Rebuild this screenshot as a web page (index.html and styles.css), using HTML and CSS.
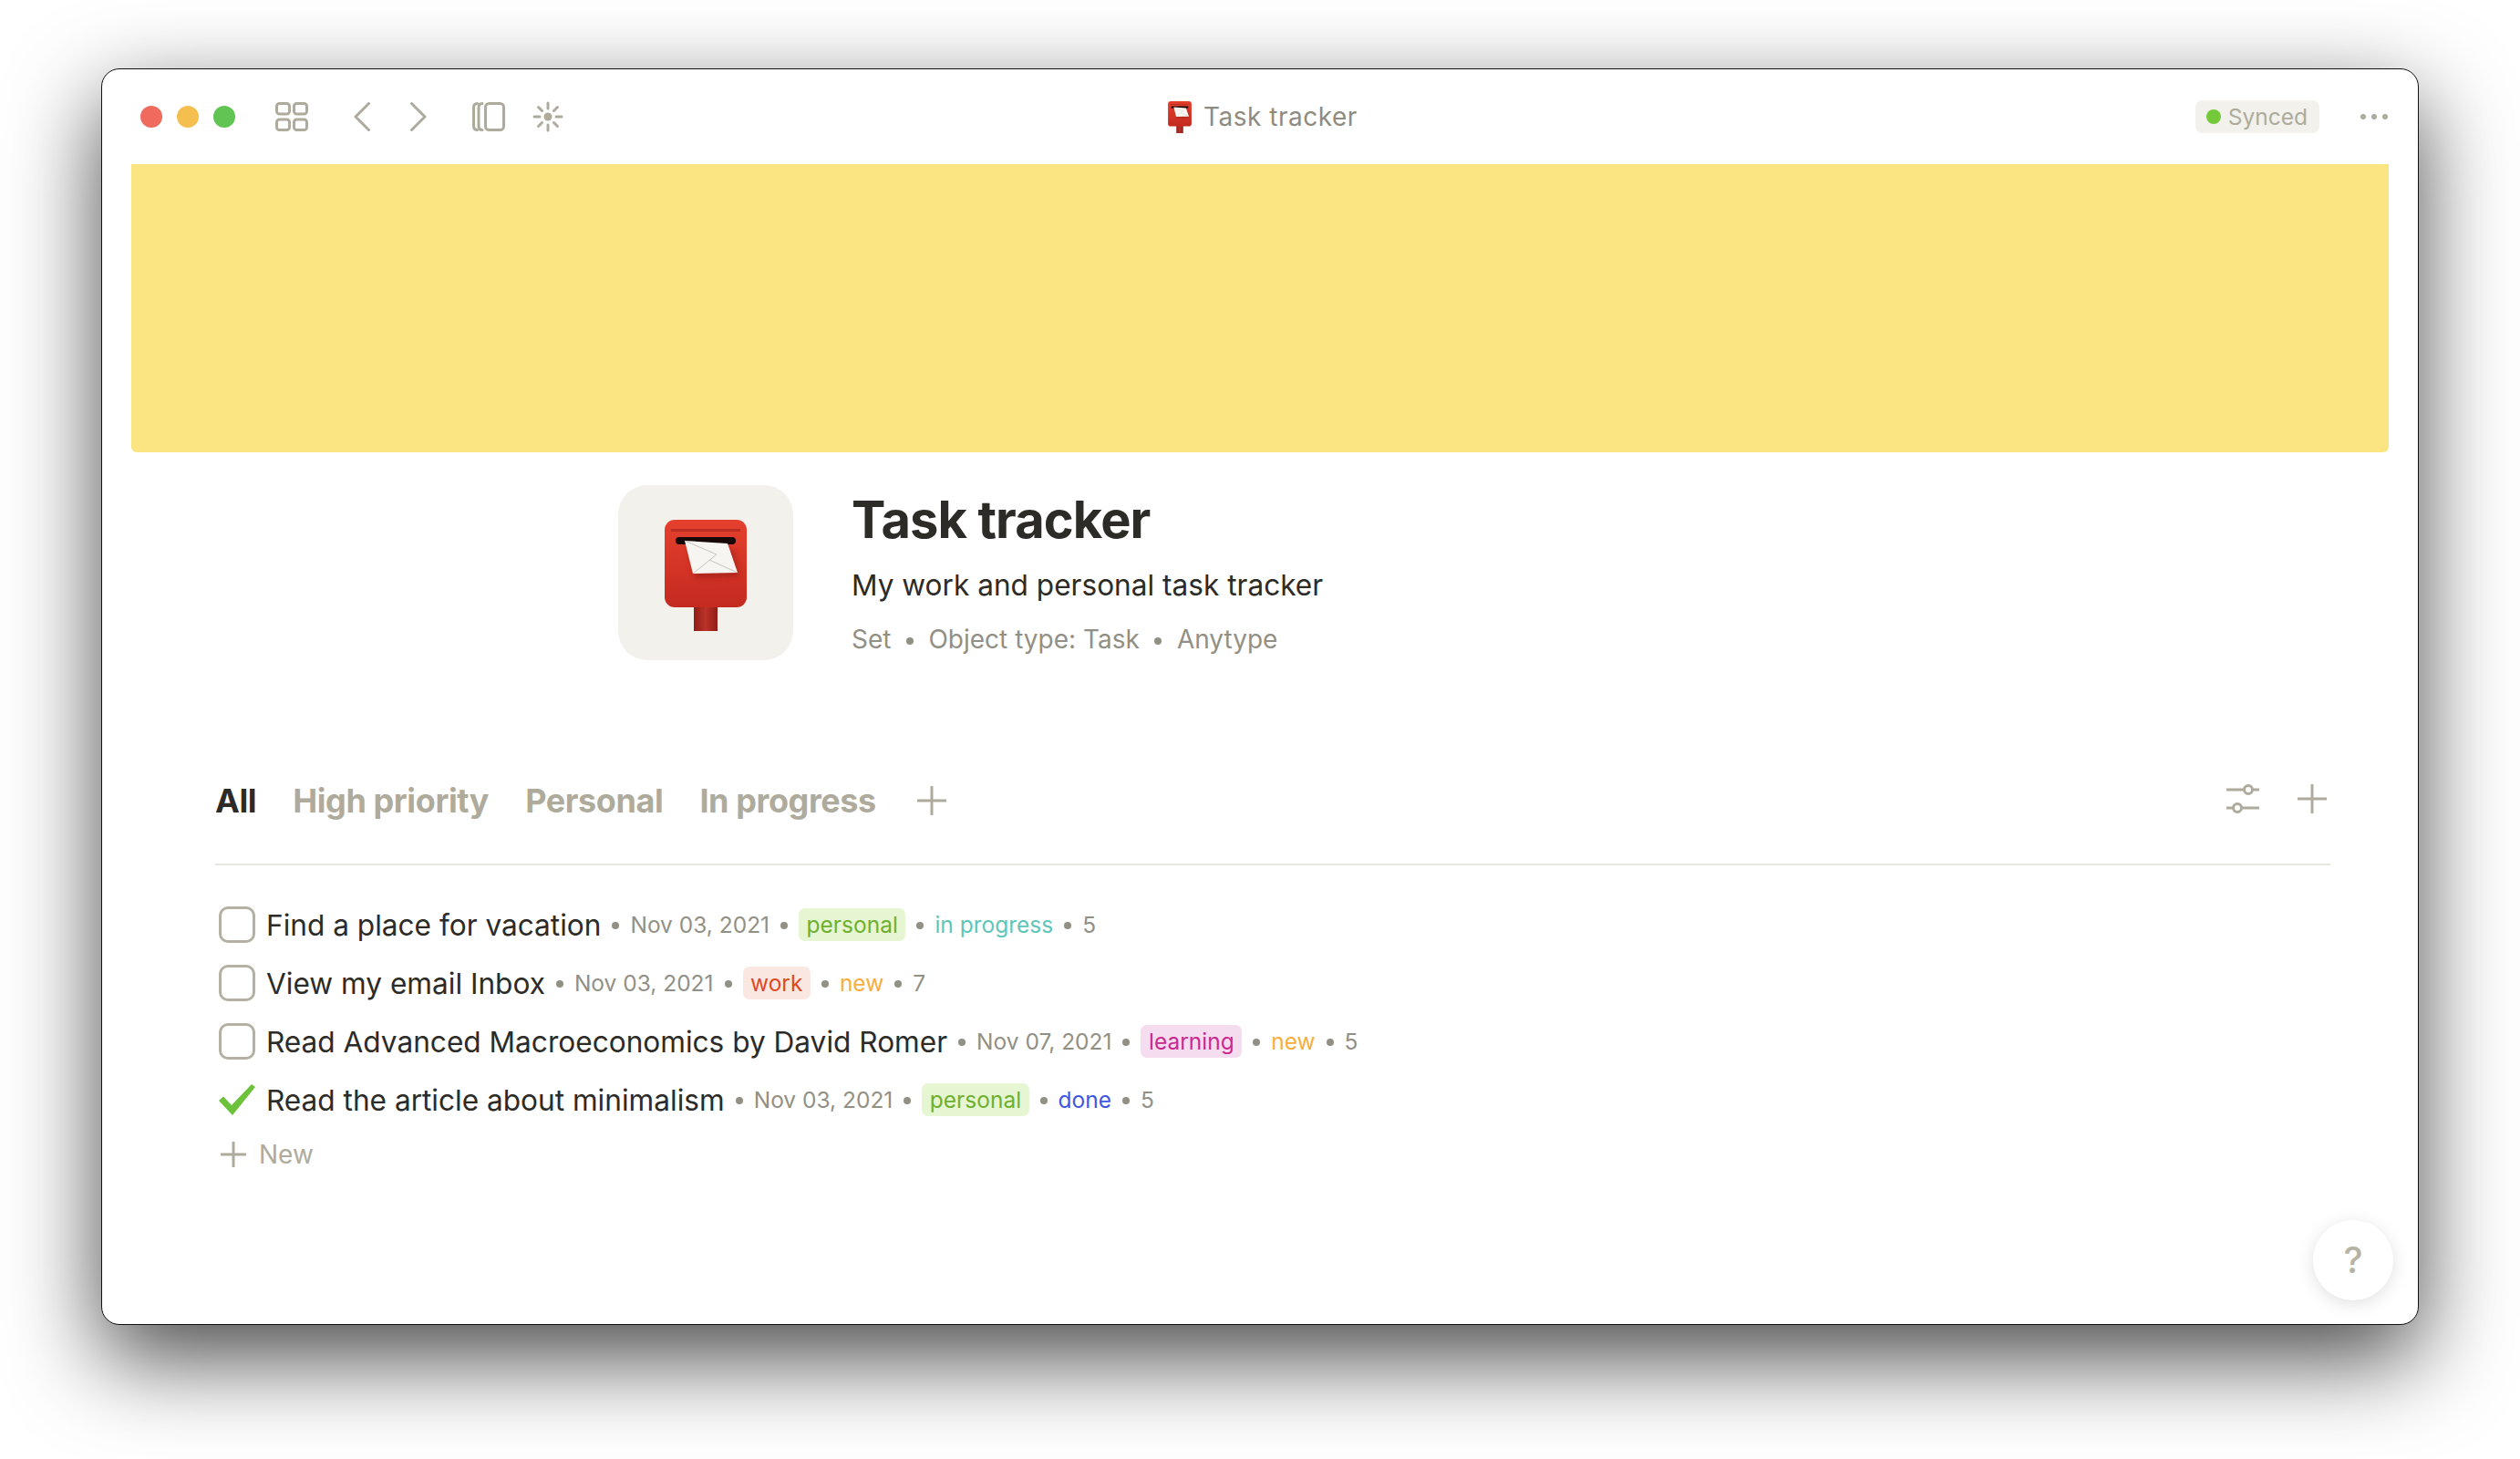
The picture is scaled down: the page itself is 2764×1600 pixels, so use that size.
FILE: index.html
```html
<!DOCTYPE html>
<html lang="en">
<head>
    <meta charset="UTF-8">
    <title>Task tracker</title>
    <link rel="stylesheet" href="styles.css">
</head>
<body>
    <svg class="defs" width="0" height="0">
        <defs>
            <linearGradient id="boxRed" x1="0" y1="0" x2="0" y2="1">
                <stop offset="0" stop-color="#e5402e"/>
                <stop offset="1" stop-color="#c42a1f"/>
            </linearGradient>
            <linearGradient id="postRed" x1="0" y1="0" x2="1" y2="0">
                <stop offset="0" stop-color="#8f1d16"/>
                <stop offset="0.5" stop-color="#bb3229"/>
                <stop offset="1" stop-color="#8f1d16"/>
            </linearGradient>
            <filter id="soft" x="-30%" y="-30%" width="160%" height="160%">
                <feGaussianBlur stdDeviation="3"/>
            </filter>
            <symbol id="postbox" viewBox="0 0 90 122">
                <rect x="32" y="90" width="26" height="32" fill="url(#postRed)"/>
                <rect width="90" height="96" rx="11" fill="url(#boxRed)"/>
                <rect x="7" y="10" width="76" height="3" fill="#a9281d" opacity="0.7"/>
                <rect x="12" y="19" width="66" height="8" rx="4" fill="#170707"/>
                <polygon points="26,30 76,34 82,62 34,64" fill="#8d1a12" opacity="0.55" filter="url(#soft)"/>
                <polygon points="22,23 69,26 80,58 31,59" fill="#f7f5f1"/>
                <path d="M22 23 L57 38 L31 59 M80 58 L49 44" fill="none" stroke="#bdb8b0" stroke-width="0.8"/>
            </symbol>
        </defs>
    </svg>

    <div class="window">
        <div class="titlebar">
            <div class="bar-left">
                <div class="lights">
                    <span class="light red"></span>
                    <span class="light yellow"></span>
                    <span class="light green"></span>
                </div>
                <svg class="icon grid-icon" viewBox="0 0 36 32">
                    <rect x="1.5" y="1.5" width="14" height="11.5" rx="3"/>
                    <rect x="20.5" y="1.5" width="14" height="11.5" rx="3"/>
                    <rect x="1.5" y="19" width="14" height="11.5" rx="3"/>
                    <rect x="20.5" y="19" width="14" height="11.5" rx="3"/>
                </svg>
                <svg class="icon back-icon" viewBox="0 0 18 32"><path d="M16.5 1.5 L2 16 L16.5 30.5"/></svg>
                <svg class="icon forward-icon" viewBox="0 0 18 32"><path d="M1.5 1.5 L16 16 L1.5 30.5"/></svg>
                <svg class="icon side-icon" viewBox="0 0 36 32">
                    <rect x="14.5" y="1.5" width="20" height="29" rx="4"/>
                    <path d="M5.5 1.5 C2.5 1.5 1.5 3.5 1.5 6 V26 C1.5 28.5 2.5 30.5 5.5 30.5"/>
                    <path d="M11 1.5 C8 1.5 7 3.5 7 6 V26 C7 28.5 8 30.5 11 30.5"/>
                </svg>
                <svg class="icon spark-icon" viewBox="0 0 34 34">
                    <circle class="solid" cx="17" cy="17" r="4.5"/>
                    <path d="M17 2 V8 M17 26 V32 M2 17 H8 M26 17 H32 M6.5 6.5 L10.5 10.5 M23.5 23.5 L27.5 27.5 M27.5 6.5 L23.5 10.5 M10.5 23.5 L6.5 27.5"/>
                </svg>
            </div>
            <div class="bar-title">
                <svg class="postbox-small"><use href="#postbox"/></svg>
                <span>Task tracker</span>
            </div>
            <div class="bar-right">
                <div class="synced"><span class="synced-dot"></span>Synced</div>
                <div class="more"><span></span><span></span><span></span></div>
            </div>
        </div>

        <div class="cover"></div>

        <div class="head">
            <div class="head-icon">
                <svg class="postbox-big"><use href="#postbox"/></svg>
            </div>
            <div class="head-text">
                <h1>Task tracker</h1>
                <p class="desc">My work and personal task tracker</p>
                <div class="info">
                    <span>Set</span><i class="info-dot"></i><span>Object type: Task</span><i class="info-dot"></i><span>Anytype</span>
                </div>
            </div>
        </div>

        <div class="content">
            <div class="views">
                <div class="tabs">
                    <span class="tab active">All</span>
                    <span class="tab">High priority</span>
                    <span class="tab">Personal</span>
                    <span class="tab">In progress</span>
                    <svg class="icon tab-plus" viewBox="0 0 32 32"><path d="M16 1 V31 M1 16 H31"/></svg>
                </div>
                <div class="view-tools">
                    <svg class="icon sliders" viewBox="0 0 36 32">
                        <path d="M1 6 H35 M1 26 H35"/>
                        <circle class="knob" cx="24" cy="6" r="4.5"/>
                        <circle class="knob" cx="12" cy="26" r="4.5"/>
                    </svg>
                    <svg class="icon tool-plus" viewBox="0 0 32 32"><path d="M16 1 V31 M1 16 H31"/></svg>
                </div>
            </div>

            <div class="rows">
                <div class="row">
                    <span class="check"></span>
                    <span class="name">Find a place for vacation</span>
                    <i class="sep"></i><span class="date">Nov 03, 2021</span>
                    <i class="sep"></i><span class="tag tag-personal">personal</span>
                    <i class="sep"></i><span class="status progress">in progress</span>
                    <i class="sep"></i><span class="num">5</span>
                </div>
                <div class="row">
                    <span class="check"></span>
                    <span class="name">View my email Inbox</span>
                    <i class="sep"></i><span class="date">Nov 03, 2021</span>
                    <i class="sep"></i><span class="tag tag-work">work</span>
                    <i class="sep"></i><span class="status new">new</span>
                    <i class="sep"></i><span class="num">7</span>
                </div>
                <div class="row">
                    <span class="check"></span>
                    <span class="name">Read Advanced Macroeconomics by David Romer</span>
                    <i class="sep"></i><span class="date">Nov 07, 2021</span>
                    <i class="sep"></i><span class="tag tag-learning">learning</span>
                    <i class="sep"></i><span class="status new">new</span>
                    <i class="sep"></i><span class="num">5</span>
                </div>
                <div class="row">
                    <svg class="done-check" viewBox="0 0 40 34"><path d="M0 18 L5 13.5 L14 23 L36 0 L40 3 L15 34 Z"/></svg>
                    <span class="name">Read the article about minimalism</span>
                    <i class="sep"></i><span class="date">Nov 03, 2021</span>
                    <i class="sep"></i><span class="tag tag-personal">personal</span>
                    <i class="sep"></i><span class="status done">done</span>
                    <i class="sep"></i><span class="num">5</span>
                </div>
            </div>

            <div class="add-row">
                <svg class="icon add-plus" viewBox="0 0 28 28"><path d="M14 1 V27 M1 14 H27"/></svg>
                <span>New</span>
            </div>
        </div>

        <div class="help">?</div>
    </div>
</body>
</html>
```

FILE: styles.css
```css
* {
    box-sizing: border-box;
}
body {
    margin: 0;
    padding: 75px 0 0 111px;
    height: 1600px;
    overflow: hidden;
    background: #fff;
    font-family: Inter, "Noto Sans", sans-serif;
}
.defs {
    position: absolute;
}
.window {
    position: relative;
    width: 2542px;
    height: 1378px;
    background: #fff;
    border: 1.5px solid #111;
    border-radius: 20px;
    box-shadow: 0 36px 100px rgba(0,0,0,0.72);
}

/* icons */
.icon {
    display: block;
    flex: none;
    fill: none;
    stroke: #aeab9c;
    stroke-width: 3;
    stroke-linecap: round;
    stroke-linejoin: round;
}
.icon .solid {
    fill: #aeab9c;
    stroke: none;
}

/* title bar */
.titlebar {
    display: grid;
    grid-template-columns: 1fr auto 1fr;
    align-items: center;
    height: 104px;
    padding: 0 32px 0 42px;
}
.bar-left {
    display: flex;
    align-items: center;
}
.lights {
    display: flex;
    gap: 16px;
}
.light {
    width: 24px;
    height: 24px;
    border-radius: 50%;
}
.red { background: #f06a5e; }
.yellow { background: #f5bf4f; }
.green { background: #61c554; }
.grid-icon {
    width: 36px;
    height: 32px;
    margin-left: 44px;
}
.back-icon, .forward-icon {
    width: 18px;
    height: 32px;
}
.back-icon { margin-left: 50px; }
.forward-icon { margin-left: 44px; }
.side-icon {
    width: 36px;
    height: 32px;
    margin-left: 50px;
}
.spark-icon {
    width: 34px;
    height: 34px;
    margin-left: 30px;
}
.bar-title {
    display: flex;
    align-items: center;
    gap: 13px;
    padding-right: 4px;
    font-size: 28px;
    letter-spacing: 0.5px;
    color: #8f8c7f;
}
.postbox-small {
    width: 26px;
    height: 35px;
}
.bar-right {
    display: flex;
    align-items: center;
    justify-content: flex-end;
}
.synced {
    display: flex;
    align-items: center;
    gap: 8px;
    height: 36px;
    padding: 0 13px 0 12px;
    border-radius: 8px;
    background: #f2f1ec;
    font-size: 24.5px;
    color: #aeab9c;
}
.synced-dot {
    width: 16px;
    height: 16px;
    border-radius: 50%;
    background: #74c93a;
}
.more {
    display: flex;
    gap: 6px;
    margin-left: 45px;
    margin-right: 1px;
}
.more span {
    width: 6px;
    height: 6px;
    border-radius: 50%;
    background: #aeab9c;
}

/* cover */
.cover {
    height: 316px;
    margin: 0 32px;
    background: #fae582;
    border-radius: 0 0 6px 6px;
}

/* object header */
.head {
    display: flex;
    gap: 65px;
    margin: 36px 0 0 566px;
}
.head-icon {
    display: flex;
    justify-content: center;
    padding-top: 38px;
    width: 192px;
    height: 192px;
    background: #f2f1ec;
    border-radius: 32px;
}
.postbox-big {
    width: 90px;
    height: 122px;
}
.head-text {
    margin-left: -1px;
    padding-top: 4px;
}
.head-text h1 {
    margin: 0;
    font-size: 56px;
    line-height: 68px;
    font-weight: 700;
    letter-spacing: -0.9px;
    color: #2c2b27;
}
.desc {
    margin: 16px 0 0;
    font-size: 31.6px;
    line-height: 44px;
    color: #2c2b27;
}
.info {
    display: flex;
    align-items: center;
    margin-top: 17px;
    font-size: 28px;
    line-height: 40px;
    color: #929084;
}
.info-dot {
    width: 8px;
    height: 8px;
    margin: 4px 16.5px 0;
    border-radius: 50%;
    background: #929084;
}

/* view tabs */
.content {
    margin: 0 96px 0 124px;
}
.views {
    display: flex;
    align-items: center;
    justify-content: space-between;
    height: 113px;
    margin-top: 112px;
    border-bottom: 2px solid #e8e7e1;
    padding-bottom: 28px;
}
.tabs {
    display: flex;
    align-items: center;
    gap: 40px;
}
.tab {
    font-size: 36px;
    font-weight: 700;
    letter-spacing: -0.4px;
    color: #aeab9c;
}
.tab.active {
    color: #2c2b27;
}
.tab-plus {
    width: 32px;
    height: 32px;
    margin-left: 5px;
}
.view-tools {
    display: flex;
    align-items: center;
    gap: 42px;
    padding: 0 4px 4px 0;
}
.sliders {
    width: 36px;
    height: 32px;
}
.sliders .knob {
    fill: #fff;
}
.tool-plus {
    width: 32px;
    height: 32px;
}

/* task rows */
.rows {
    margin-top: 33px;
}
.row {
    display: flex;
    align-items: center;
    height: 64px;
    padding-left: 4px;
}
.check {
    flex: none;
    width: 40px;
    height: 40px;
    margin-right: 12px;
    border: 3px solid #b4b1a2;
    border-radius: 10px;
}
.done-check {
    flex: none;
    width: 40px;
    height: 34px;
    margin-right: 12px;
    fill: #6cc23a;
}
.name {
    font-size: 31.6px;
    color: #2c2b27;
}
.sep {
    flex: none;
    width: 8px;
    height: 8px;
    margin: 2px 12px 0;
    border-radius: 50%;
    background: #929084;
}
.date, .num {
    font-size: 24.5px;
    color: #929084;
}
.tag, .status {
    font-size: 24.5px;
}
.tag {
    height: 36px;
    line-height: 36px;
    padding: 0 8.5px;
    border-radius: 7px;
}
.tag-personal { background: #e6f5d2; color: #6fb02e; }
.tag-work { background: #fbe7e2; color: #dc4a22; }
.tag-learning { background: #f6dcef; color: #c92a8f; }
.progress { color: #5ec6b8; }
.new { color: #f7ae3c; }
.done { color: #3f56e0; }

.add-row {
    display: flex;
    align-items: center;
    gap: 14px;
    margin-top: 11px;
    padding-left: 6px;
    font-size: 28px;
    color: #aeab9c;
}
.add-plus {
    width: 28px;
    height: 28px;
}

/* help button */
.help {
    position: absolute;
    right: 27px;
    bottom: 26px;
    width: 88px;
    height: 88px;
    line-height: 88px;
    text-align: center;
    border-radius: 50%;
    background: #fff;
    box-shadow: 0 4px 20px rgba(0,0,0,0.12);
    font-size: 40px;
    font-weight: 500;
    color: #b6b3a3;
}
```
